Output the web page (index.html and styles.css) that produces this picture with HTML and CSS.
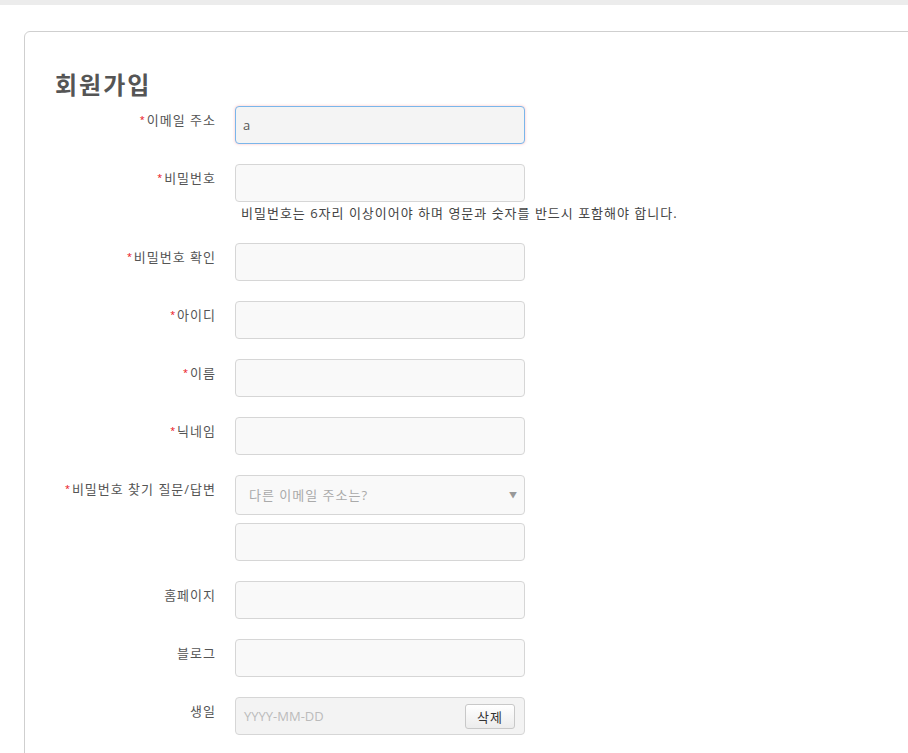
FILE: index.html
```html
<!DOCTYPE html>
<html lang="ko">
<head>
<meta charset="utf-8">
<title>회원가입</title>
<link rel="stylesheet" href="styles.css">
</head>
<body>
<div class="topbar"></div>
<div class="page">
  <div class="card">
    <h1 class="title">회원가입</h1>
    <form class="form">
      <div class="row">
        <label class="label"><span class="req">*</span>이메일 주소</label>
        <div class="field"><div class="input focused">a</div></div>
      </div>
      <div class="row">
        <label class="label"><span class="req">*</span>비밀번호</label>
        <div class="field">
          <div class="input"></div>
          <p class="help">비밀번호는 6자리 이상이어야 하며 영문과 숫자를 반드시 포함해야 합니다.</p>
        </div>
      </div>
      <div class="row">
        <label class="label"><span class="req">*</span>비밀번호 확인</label>
        <div class="field"><div class="input"></div></div>
      </div>
      <div class="row">
        <label class="label"><span class="req">*</span>아이디</label>
        <div class="field"><div class="input"></div></div>
      </div>
      <div class="row">
        <label class="label"><span class="req">*</span>이름</label>
        <div class="field"><div class="input"></div></div>
      </div>
      <div class="row">
        <label class="label"><span class="req">*</span>닉네임</label>
        <div class="field"><div class="input"></div></div>
      </div>
      <div class="row">
        <label class="label"><span class="req">*</span>비밀번호 찾기 질문/답변</label>
        <div class="field">
          <div class="input select"><span class="placeholder">다른 이메일 주소는?</span><span class="caret">▼</span></div>
          <div class="input answer"></div>
        </div>
      </div>
      <div class="row">
        <label class="label">홈페이지</label>
        <div class="field"><div class="input"></div></div>
      </div>
      <div class="row">
        <label class="label">블로그</label>
        <div class="field"><div class="input"></div></div>
      </div>
      <div class="row">
        <label class="label">생일</label>
        <div class="field">
          <div class="input date"><span class="placeholder-date">YYYY-MM-DD</span><button type="button" class="btn">삭제</button></div>
        </div>
      </div>
    </form>
  </div>
</div>
</body>
</html>
```

FILE: styles.css
```css
html, body {
  margin: 0;
  padding: 0;
  overflow: hidden;
  background: #fff;
}
body {
  font-family: "Open Sans", "Noto Sans CJK KR", sans-serif;
  font-size: 13px;
  color: #555;
  width: 908px;
  height: 753px;
}
.topbar {
  height: 5px;
  background: #ececec;
}
.page {
  padding: 26px 0 0 24px;
}
.card {
  width: 920px;
  height: 740px;
  border: 1px solid #cfcfcf;
  border-radius: 6px;
  padding: 38px 0 0 30px;
  box-sizing: border-box;
}
.title {
  margin: 0 0 6px 0;
  font-size: 24px;
  line-height: 30px;
  font-weight: 700;
  letter-spacing: 2px;
  color: #555;
}
.form {
  display: flex;
  flex-direction: column;
  gap: 20px;
}
.row {
  display: grid;
  grid-template-columns: 160px 290px;
  column-gap: 20px;
}
.label {
  text-align: right;
  padding-top: 4px;
  line-height: 20px;
  letter-spacing: 1px;
  color: #555;
  margin-right: -1px;
}
.req {
  color: #e8000b;
  font-size: 9px;
  margin-right: 1px;
  position: relative;
  top: -2px;
}
.field {
  display: flex;
  flex-direction: column;
}
.input {
  box-sizing: border-box;
  height: 38px;
  border: 1px solid #d6d6d6;
  border-radius: 4px;
  background: #f9f9f9;
  padding: 0 7px;
  line-height: 36px;
  color: #555;
}
.input.focused {
  background: #f4f4f4;
  border-color: #7ab6ea;
  box-shadow: 0 0 3px rgba(255, 80, 80, 0.35);
}
.help {
  margin: 1px 0 0 6px;
  line-height: 20px;
  letter-spacing: 1px;
  color: #444;
  white-space: nowrap;
}
.select {
  height: 40px;
  line-height: 38px;
  display: flex;
  justify-content: space-between;
  padding: 0 7px 0 13px;
  letter-spacing: 1px;
}
.placeholder {
  color: #aaa;
}
.caret {
  color: #999;
  font-size: 8px;
  letter-spacing: 0;
}
.answer {
  margin-top: 8px;
}
.date {
  background: #f3f3f3;
  display: flex;
  align-items: center;
  justify-content: space-between;
  padding: 0 9px 0 8px;
}
.placeholder-date {
  color: #bbb;
}
.btn {
  width: 50px;
  height: 25px;
  border: 1px solid #c8c8c8;
  border-radius: 3px;
  background: linear-gradient(#ffffff, #ececec);
  font-family: "Open Sans", "Noto Sans CJK KR", sans-serif;
  font-size: 13px;
  letter-spacing: 1px;
  color: #333;
  padding: 0;
  margin-top: 1px;
}
```
